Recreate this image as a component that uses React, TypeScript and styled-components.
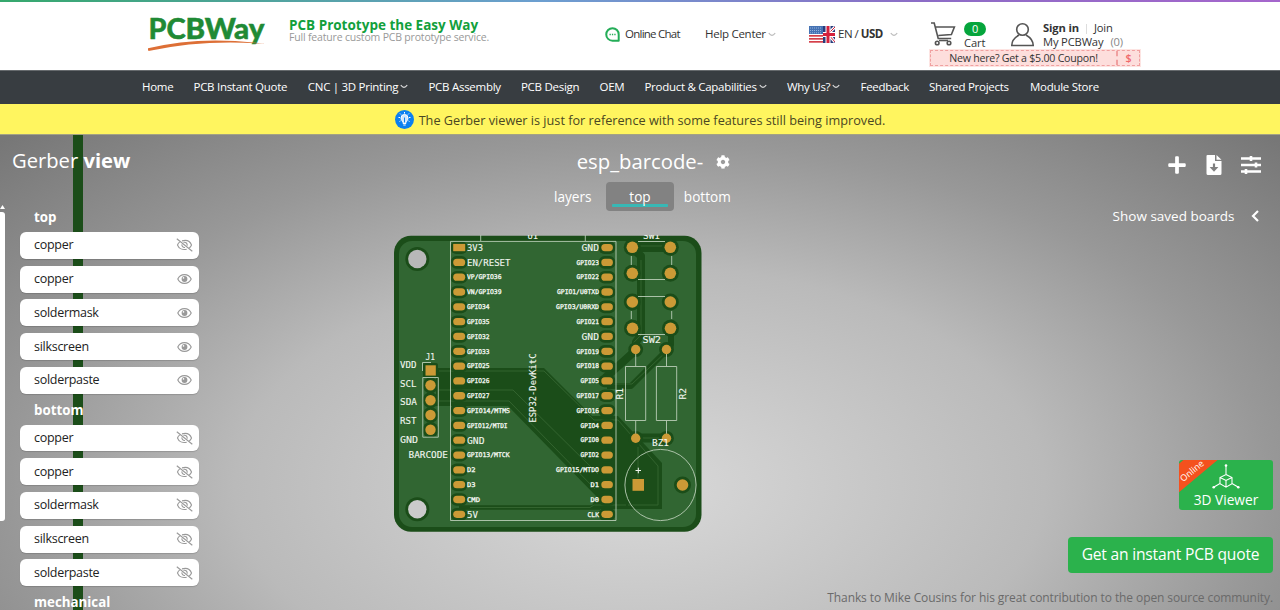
import React from 'react';
import styled, { createGlobalStyle } from 'styled-components';
import { FaPlus, FaCog } from 'react-icons/fa';

const GlobalStyle = createGlobalStyle`
  * { box-sizing: border-box; }
  body { margin: 0; overflow: hidden; font-family: "Open Sans", "Noto Sans", sans-serif; color: #333; }
  svg { display: block; flex: none; }
`;

const Page = styled.div`
  width: 1280px;
  height: 610px;
  display: flex;
  flex-direction: column;
  overflow: hidden;
`;

const Rainbow = styled.div`
  height: 2px;
  flex: none;
  background: linear-gradient(90deg, #35a86c, #6c9fd0 42%, #8c6cc6 72%, #a566cc);
`;

const Header = styled.header`
  height: 68px;
  flex: none;
  background: #fff;
  display: grid;
  grid-template-columns: 141px 316px 100px 104px 122px 211px;
  padding-left: 148px;
  font-size: 12px;
  white-space: nowrap;
`;

const Slogan = styled.div`
  padding-top: 14px;
`;
const SloganTitle = styled.div`
  font-size: 13.5px;
  line-height: 18px;
  font-weight: 700;
  color: #12a03c;
`;
const SloganSub = styled.div`
  font-size: 10.5px;
  line-height: 12px;
  letter-spacing: -0.18px;
  margin-top: -3px;
  color: #999;
`;

const Tool = styled.div<{ $gap?: number; $tracking?: number }>`
  height: 22px;
  margin-top: 21px;
  display: flex;
  align-items: center;
  gap: ${(p) => p.$gap ?? 5}px;
  font-size: 11.5px;
  letter-spacing: ${(p) => p.$tracking ?? -0.28}px;
`;
const ToolText = styled.span`
  margin-top: -1px;
`;
const Currency = styled.span`
  margin: -1px 4px 0 0;
`;

const AccountArea = styled.div`
  display: grid;
  grid-template-columns: 80px 131px;
  grid-template-rows: 48px 18px;
`;
const Account = styled.div<{ $gap: number }>`
  display: flex;
  padding-top: 18px;
  gap: ${(p) => p.$gap}px;
`;
const Lines = styled.div`
  font-size: 11.2px;
  line-height: 14px;
  letter-spacing: -0.15px;
  padding-top: 1px;
`;
const Line = styled.div`
  display: flex;
  gap: 7px;
`;
const Divider = styled.span`
  width: 1px;
  height: 10px;
  margin-top: 3px;
  background: #ddd;
`;
const Muted = styled.span`
  color: #888;
`;
const Badge = styled.div`
  width: 22px;
  height: 14px;
  margin-top: 1px;
  border-radius: 7px;
  background: #05a53c;
  color: #fff;
  font-size: 11px;
  line-height: 14px;
  text-align: center;
`;
const Coupon = styled.div`
  grid-column: 1 / -1;
  width: 210px;
  height: 16px;
  margin: 0 0 0 -1px;
  border: 1px dashed #f0a0a0;
  outline: 1px solid #fde4e2;
  background: #fddedc;
  display: grid;
  grid-template-columns: 185px 1fr;
  font-size: 10.6px;
  letter-spacing: -0.23px;
  line-height: 14px;
  text-align: center;
`;
const CouponAmount = styled.span`
  border-left: 2px dashed #f0a0a0;
  color: #f0696c;
  font-weight: 600;
`;

const Nav = styled.nav`
  height: 34px;
  flex: none;
  border-top: 1px solid #666a6d;
  background: #383d41;
  color: #fff;
  display: flex;
  padding: 0 0 2px 142px;
  font-size: 11.5px;
  letter-spacing: -0.28px;
  white-space: nowrap;
`;
const NavItem = styled.span<{ $w: number }>`
  flex: none;
  width: ${(p) => p.$w}px;
  display: flex;
  align-items: center;
  gap: 2px;
`;

const Notice = styled.div`
  height: 30px;
  flex: none;
  background: #fff55f;
  display: flex;
  align-items: center;
  justify-content: center;
  gap: 5px;
  padding-top: 1px;
  font-size: 12.7px;
  color: #4a4722;
`;

const Stage = styled.main`
  position: relative;
  flex: 1;
  min-height: 0;
  border-top: 1px solid #a3a284;
  background: radial-gradient(ellipse 900px 490px at 50% 74%, #d9d9d9 0%, #bababa 45%, #989898 70%, #777 100%);
  color: #fff;
  display: grid;
  grid-template-columns: minmax(0, 1fr) 300px minmax(0, 1fr);
`;
const EdgeStrip = styled.div`
  position: absolute;
  left: 73px;
  top: 0;
  bottom: 0;
  width: 10px;
  background: #1b4d19;
`;
const BoardLayer = styled.div`
  position: absolute;
  left: 394px;
  top: 100px;
`;

const Side = styled.section`
  position: relative;
  min-height: 0;
  overflow: hidden;
`;
const Brand = styled.h1`
  margin: 0;
  height: 66px;
  padding: 11px 0 0 12px;
  font-size: 20.2px;
  line-height: 28px;
  font-weight: 400;
`;
const Panel = styled.div`
  display: flex;
  gap: 15px;
`;
const ScrollTrack = styled.div`
  width: 5px;
  padding-top: 4px;
  display: flex;
  flex-direction: column;
  gap: 3px;
`;
const ScrollThumb = styled.div`
  height: 309px;
  border-radius: 0 3px 3px 0;
  background: #fff;
`;
const LayerList = styled.div`
  width: 179px;
`;
const GroupName = styled.div`
  height: 31px;
  padding-left: 14px;
  font-size: 13.3px;
  line-height: 33px;
  font-weight: 700;
`;
const Group = styled.div`
  height: 192.5px;
`;
const Rows = styled.div`
  display: flex;
  flex-direction: column;
  gap: 6.95px;
`;
const LayerRow = styled.div`
  height: 26.8px;
  padding: 0 6px 0 14px;
  border-radius: 6px;
  background: #fff;
  color: #222;
  box-shadow: 0 1px 1px rgba(0, 0, 0, 0.15);
  display: flex;
  align-items: center;
  justify-content: space-between;
  font-size: 12.5px;
  letter-spacing: -0.28px;
  line-height: 28px;
`;

const Center = styled.section`
  position: relative;
  display: flex;
  flex-direction: column;
  align-items: center;
`;
const BoardName = styled.div`
  height: 47px;
  padding-top: 13px;
  display: grid;
  grid-template-columns: 27px auto 27px;
  font-size: 20.3px;
  line-height: 27px;
`;
const GearSlot = styled.span`
  padding: 7px 0 0 13px;
`;
const Tabs = styled.div`
  display: flex;
`;
const Tab = styled.div<{ $active?: boolean }>`
  width: 67.3px;
  height: 29px;
  padding: 0 6px;
  border-radius: 4px;
  background: ${(p) => (p.$active ? '#828282' : 'transparent')};
  font-size: 13.6px;
  line-height: 29px;
  text-align: center;
`;
const Underline = styled.div`
  height: 3px;
  margin-top: -7px;
  border-radius: 1px;
  background: #38b8b5;
`;

const Right = styled.section`
  position: relative;
  display: flex;
  flex-direction: column;
  align-items: flex-end;
  padding-right: 7px;
`;
const Actions = styled.div`
  display: flex;
  align-items: center;
  gap: 19px;
  height: 22px;
  margin: 19px 12px 0 0;
`;
const Saved = styled.div`
  display: flex;
  align-items: center;
  gap: 16px;
  height: 24px;
  margin: 28px 14.5px 0 0;
  font-size: 13.5px;
`;
const ViewerButton = styled.div`
  position: relative;
  width: 94px;
  height: 50px;
  margin-top: 232px;
  border-radius: 3px;
  background: #2bb24c;
  overflow: hidden;
  display: flex;
  flex-direction: column;
  align-items: center;
  padding-top: 4px;
  font-size: 13.7px;
  line-height: 20px;
`;
const Ribbon = styled.div`
  position: absolute;
  left: -25px;
  top: 0;
  width: 76px;
  height: 22px;
  transform: rotate(-40deg) translate(0, -3px);
  background: #f4511e;
  font-size: 9px;
  line-height: 28px;
  text-align: center;
`;
const QuoteButton = styled.div`
  width: 205px;
  height: 36px;
  margin-top: 27px;
  border-radius: 4px;
  background: #2bb24c;
  font-size: 15.6px;
  letter-spacing: -0.2px;
  line-height: 35px;
  text-align: center;
  white-space: nowrap;
`;
const Thanks = styled.div`
  margin-top: 15px;
  font-size: 12px;
  letter-spacing: -0.09px;
  line-height: 20px;
  color: #6a6a6a;
  white-space: nowrap;
`;

const Chevron = ({ color = '#bbb' }: { color?: string }) => (
  <svg width="8" height="5" viewBox="0 0 8 5" fill="none" stroke={color} strokeWidth="1.200"><path d="M.8 1 Q4 5.600 7.200 1" /></svg>
);

const Logo = () => (
  <svg width="120" height="66" viewBox="148 2 120 66">
    <g fill="#1f8a35" stroke="#1f8a35" fontFamily="Lato, sans-serif">
      <text x="148.500" y="39.300" fontSize="28.500" fontWeight="700" textLength="37" lengthAdjust="spacingAndGlyphs" strokeWidth=".7">PC</text>
      <text x="185.500" y="39.300" fontSize="28.500" fontWeight="900" textLength="79" lengthAdjust="spacingAndGlyphs" strokeWidth=".5">BWay</text>
    </g>
    <path d="M147.500 48.500 Q200 35 266 44 Q205 39 148.500 51Z" fill="#dd6f36" />
  </svg>
);

const ChatIcon = () => (
  <svg width="15" height="15" viewBox="0 0 15 15">
    <path d="M7.500 1.200a6.200 6.200 0 1 0 0 12.500h6.200v-6.200a6.200 6.200 0 0 0-6.200-6.300z" fill="none" stroke="#24ad58" strokeWidth="2" strokeLinejoin="round" />
    <path d="M4.500 7.500h1.300M6.900 7.500h1.300M9.300 7.500h1.300" stroke="#24ad58" strokeWidth="1.400" />
  </svg>
);

const Flags = () => (
  <svg width="26" height="17" viewBox="0 0 26 17">
    <rect width="14" height="17" fill="#fff" />
    {[0, 1, 2, 3, 4, 5].map((i) => <rect key={i} y={i * 3} width="14" height="1.700" fill="#d5404a" />)}
    <rect width="14" height="8" fill="#4673b4" />
    <path d="M1 2h12M1 4.500h12M1 6.800h12" stroke="#a9c2e4" strokeWidth=".8" strokeDasharray="1 1" />
    <rect x="14" width="12" height="17" fill="#293c7c" />
    <path d="M19 8L26 1M19 8L26 16" stroke="#fff" strokeWidth="3" />
    <path d="M19 8L26 1M19 8L26 16" stroke="#d4213d" strokeWidth="1" />
    <path d="M14 8.500h12M19 0v17" stroke="#fff" strokeWidth="5" />
    <path d="M14 8.500h12M19 0v17" stroke="#d4213d" strokeWidth="3" />
  </svg>
);

const CartIcon = () => (
  <svg width="26" height="26" viewBox="0 0 26 26" fill="none" stroke="#555" strokeWidth="1.600">
    <path d="M0 3h3.200l4 15.500h13M4.400 7h19l-3 7.500-13 1" />
    <circle cx="6.200" cy="23" r="1.800" /><circle cx="18" cy="23" r="1.800" /><path d="M8 20.500h9" />
  </svg>
);
const UserIcon = () => (
  <svg width="25" height="27" viewBox="0 0 25 27" fill="none" stroke="#555" strokeWidth="1.600">
    <circle cx="11.500" cy="9.500" r="5.800" /><path d="M.8 25.500c0-6 3.700-8.500 7.200-10.500M22.200 25.500c0-6-3.700-8.500-7.200-10.500M0 25.500h23" />
  </svg>
);

const BulbIcon = () => (
  <svg width="19" height="19" viewBox="0 0 19 19">
    <circle cx="9.500" cy="9.500" r="9.500" fill="#0b80f0" />
    <path d="M7.700 12.300C7.300 10.500 6 10 6 8a3.500 3.500 0 0 1 7 0c0 2-1.300 2.500-1.700 4.300zM7.800 13.500h3.400M8.300 15h2.400" fill="#cfe5fb" stroke="#fff" strokeWidth="1" />
    <path d="M9.500 7.500v5" stroke="#0b80f0" />
    <path d="M9.500 2v1.600M3.500 7.500h1.500M14 7.500h1.500M5 3.500l1 1M14 3.500l-1 1M4.500 11.500l1-.6M14.500 11.500l-1-.6" stroke="#fff" strokeWidth="1" />
  </svg>
);

const Eye = ({ hidden }: { hidden: boolean }) => (
  <svg width="17" height="14" viewBox="0 0 17 14" fill="none" stroke="#999" strokeWidth="1.100">
    {hidden ? (
      <>
        <path d="M6 2.900C10 1.800 14 3 15.500 7c-.5 1.300-1.200 2.200-2.200 3M3.800 3.900C2.700 4.600 1.900 5.700 1.500 7c1.300 3.700 5.200 5.200 9.200 4.200M6 6.300A2.600 2.600 0 0 0 9 9.500M7.500 4.500a2.600 2.600 0 0 1 3.500 3.300" />
        <path d="M.8.800l15.500 12.400" />
      </>
    ) : (
      <>
        <path d="M1.800 7C3.200 3.800 5.500 2.600 8.500 2.600S13.800 3.800 15.200 7c-1.400 3.200-3.700 4.400-6.700 4.400S3.200 10.200 1.800 7z" />
        <circle cx="8.500" cy="7" r="2.900" fill="#999" stroke="none" />
        <circle cx="7.500" cy="5.900" r=".8" fill="#fff" stroke="none" />
      </>
    )}
  </svg>
);

const FileIcon = () => (
  <svg width="16" height="20" viewBox="0 0 16 20">
    <path d="M1.500 0H9v6h6.500v12.500a1.500 1.500 0 0 1-1.500 1.500H2A1.500 1.500 0 0 1 .5 18.500V1A1 1 0 0 1 1.500 0zM10.500 0l5 4.800h-5z" fill="#fff" />
    <path d="M8 8.500v4" stroke="#808080" strokeWidth="2.200" /><path d="M3.600 12h8.800L8 16.800z" fill="#808080" />
  </svg>
);
const SlidersIcon = () => (
  <svg width="20" height="18" viewBox="0 0 20 18" stroke="#fff" strokeWidth="2.300">
    <path d="M0 2.500h20M0 9h20M0 15.500h20" /><path d="M10 0v5M15 6.500v5M5 13v5" strokeWidth="2.600" />
  </svg>
);
const CubeIcon = () => (
  <svg width="28" height="26" viewBox="0 0 28 26" fill="none" stroke="#fff" strokeWidth="1.100">
    <path d="M14 10.500l6 3v6.200l-6 3.500-6-3.500v-6.200zM8 13.500l6 3 6-3M14 16.500v6.500M14 10.500V2M8 19.500l-6 3.500M20 19.500l6 3.500" />
    <g fill="#fff" stroke="none"><circle cx="14" cy="1.500" r="1.300" /><circle cx="1.700" cy="23.300" r="1.300" /><circle cx="26.300" cy="23.300" r="1.300" /></g>
  </svg>
);

type Pin = [label: string, width: number, big?: boolean];
const leftPins: Pin[] = [
  ['3V3', 16, true], ['EN/RESET', 43.500, true], ['VP/GPIO36', 34.500], ['VN/GPIO39', 34.500], ['GPIO34', 22.500], ['GPIO35', 22.500],
  ['GPIO32', 22.500], ['GPIO33', 22.500], ['GPIO25', 22.500], ['GPIO26', 22.500], ['GPIO27', 22.500], ['GPIO14/MTMS', 43],
  ['GPIO12/MTDI', 40.500], ['GND', 17.500, true], ['GPIO13/MTCK', 42.500], ['D2', 8.500], ['D3', 8.500], ['CMD', 13], ['5V', 11, true],
];
const rightPins: Pin[] = [
  ['GND', 17.500, true], ['GPIO23', 22.500], ['GPIO22', 22.500], ['GPIO1/U0TXD', 42], ['GPIO3/U0RXD', 43], ['GPIO21', 22.500],
  ['GND', 17.500, true], ['GPIO19', 22.500], ['GPIO18', 22.500], ['GPIO5', 18.500], ['GPIO17', 22.500], ['GPIO16', 22.500],
  ['GPIO4', 18.500], ['GPIO0', 18.500], ['GPIO2', 18.500], ['GPIO15/MTDO', 43], ['D1', 8.500], ['D0', 8.500], ['CLK', 11.500],
];
const pinY = (i: number) => 247.600 + i * 14.820;

type LabelProps = { x: number; y: number; w: number; size?: number; heavy?: boolean; children: string };
const Label = ({ x, y, w, size = 9, heavy, children }: LabelProps) => (
  <text x={x} y={y} fontSize={size} stroke="#f2f6f0" strokeWidth={heavy ? 0.3 : 0.1} textLength={w} lengthAdjust="spacingAndGlyphs">{children}</text>
);

const dark = '#1b4d19';
const gold = '#cc9a36';
const pads: [number, number, number][] = [
  [632.300, 247.300, 5.800], [670.300, 247.300, 5.800], [632.300, 273.300, 5.800], [670.300, 273.300, 5.800],
  [632.300, 302, 5.800], [670.300, 302, 5.800], [632.500, 328.300, 5.800], [670.500, 328.300, 5.800],
  [635.700, 349.500, 4.700], [666.500, 349.500, 4.700], [635.700, 438.300, 4.700], [666.500, 438.300, 4.700],
  [682.500, 485, 5.800], [430.500, 385.300, 5.200], [430.500, 400.200, 5.200], [430.500, 415, 5.200], [430.500, 429.800, 5.200],
];

const Board = () => (
  <svg width="308" height="298" viewBox="394 235 308 298">
    <rect x="394" y="235.700" width="307.500" height="296" rx="17" fill={dark} />
    <rect x="399" y="241" width="297" height="286" rx="13" fill="#316632" />
    <path d="M436 368H544L592 416H618L662 463V509H590L597 497L508 406H436Z" fill={dark} />
    <g fill="none" stroke={dark} strokeWidth="4.500" strokeLinejoin="round">
      <path d="M459 507.500H600" />
      <path d="M632 247H670" strokeWidth="10" />
      <path d="M634 250L641 256V335L636 342V350L605 378" strokeWidth="8" />
      <path d="M671 328V345L665 352L631 386H607" strokeWidth="6" />
      <path d="M636 438H666" strokeWidth="9" />
    </g>
    <g fill="none" stroke="#33642f" strokeWidth="1">
      <path d="M439 371H544L594 420H618L658 466V505H628" />
      <path d="M439 390H513L598 474" />
      <path d="M439 401H509L595 489" />
      <path d="M470 507.500H590L594 505H626" />
      <path d="M638 246H668M641 260V335L607 370M668 350L632 384H609M640 438H662" />
      <path d="M638 447V478" />
    </g>
    {[259, 509.300].map((y) => (
      <g key={y}><circle cx="417.300" cy={y} r="12" fill={dark} /><circle cx="417.300" cy={y} r="9.200" fill={y < 300 ? '#b8b8b8' : '#cbcbcb'} /></g>
    ))}
    <g fill={dark}>
      {pads.map(([x, y, r]) => <circle key={`${x}-${y}`} cx={x} cy={y} r={r + 2.700} />)}
      {leftPins.map((_, i) => (
        <g key={i}>
          <rect x="450.500" y={pinY(i) - 6.300} width="17" height="12.600" rx="6" />
          <rect x="598.500" y={pinY(i) - 6.300} width="17" height="12.600" rx="6" />
        </g>
      ))}
      <rect x="423" y="363" width="15" height="15" rx="2" />
    </g>
    <g fill="none" stroke="#b9cdb5" strokeWidth=".9">
      <path d="M450.500 241.400H616V520.500H450.500Z" />
      <path d="M480.700 235V241M585.300 235V241" />
      <path d="M422.500 371V362.500H431M422.800 377.500H438.300V437.200H422.800Z" />
      <path d="M638 241.500H665M638 279.500H665M631.300 256V265M671.700 256V265M638 296.500H665M638 334.500H665M631.300 311V319M671.700 311V319" />
      <path d="M625.500 366.500H645.700V420.500H625.500ZM656.400 366.500H676.700V420.500H656.400ZM635.700 354V366.500M666.500 354V366.500M635.700 420.500V434M666.500 420.500V434" />
      <circle cx="660.500" cy="485" r="35.600" />
    </g>
    <g fill={gold}>
      {pads.map(([x, y, r]) => <circle key={`${x}-${y}`} cx={x} cy={y} r={r} />)}
      {leftPins.map((_, i) => (
        <g key={i}>
          <rect x="453.200" y={pinY(i) - 3.700} width="12" height="7.300" rx={i === 0 ? 0 : 3.600} />
          <rect x="601.300" y={pinY(i) - 3.700} width="11.600" height="7.300" rx="3.600" />
        </g>
      ))}
      <rect x="425.500" y="365.300" width="10.300" height="10.300" />
      <rect x="632.500" y="479" width="11.500" height="11.800" />
    </g>
    <g fill="#f2f6f0" fontFamily='"DejaVu Sans Mono", "Liberation Mono", monospace'>
      {leftPins.map(([t, w, big], i) => (
        <Label key={i} x={467} y={pinY(i) + (big ? 3.500 : 2.200)} w={w} size={big ? 9 : 6.400} heavy={!big}>{t}</Label>
      ))}
      {rightPins.map(([t, w, big], i) => (
        <Label key={i} x={599 - w} y={pinY(i) + (big ? 3.500 : 2.200)} w={w} size={big ? 9 : 6.400} heavy={!big}>{t}</Label>
      ))}
      <Label x={400} y={367.500} w={16.500}>VDD</Label>
      <Label x={400} y={386.500} w={16.500}>SCL</Label>
      <Label x={400} y={405} w={17}>SDA</Label>
      <Label x={400} y={424} w={16.500}>RST</Label>
      <Label x={400} y={443} w={18}>GND</Label>
      <Label x={425.500} y={360} w={9.500}>J1</Label>
      <Label x={408.500} y={458} w={39.500}>BARCODE</Label>
      <Label x={527.500} y={238.500} w={10.500}>U1</Label>
      <Label x={643} y={238.500} w={17}>SW1</Label>
      <Label x={642.500} y={343} w={18.500}>SW2</Label>
      <Label x={652} y={446} w={17}>BZ1</Label>
      <path d="M635.500 470.500H641M638.300 467.700V473.300" stroke="#f2f6f0" strokeWidth="1" />
      <g transform="translate(536 422.500) rotate(-90)"><Label x={0} y={0} w={69}>ESP32-DevKitC</Label></g>
      <g transform="translate(623 399.500) rotate(-90)"><Label x={0} y={0} w={11.500}>R1</Label></g>
      <g transform="translate(685.500 399.500) rotate(-90)"><Label x={0} y={0} w={11.500}>R2</Label></g>
    </g>
  </svg>
);

const layerNames = ['copper', 'copper', 'soldermask', 'silkscreen', 'solderpaste'];
const navItems: [string, number, boolean?][] = [
  ['Home', 51.500], ['PCB Instant Quote', 114.300], ['CNC | 3D Printing', 120.700, true], ['PCB Assembly', 92.500], ['PCB Design', 78.500],
  ['OEM', 45], ['Product & Capabilities', 142.500, true], ['Why Us?', 73.500, true], ['Feedback', 68.500], ['Shared Projects', 101], ['Module Store', 80],
];

export default function App() {
  return (
    <Page>
      <GlobalStyle />
      <Rainbow />
      <Header>
        <Logo />
        <Slogan>
          <SloganTitle>PCB Prototype the Easy Way</SloganTitle>
          <SloganSub>Full feature custom PCB prototype service.</SloganSub>
        </Slogan>
        <Tool $tracking={-0.75}><ChatIcon /><ToolText>Online Chat</ToolText></Tool>
        <Tool $gap={2}><ToolText>Help Center</ToolText><Chevron /></Tool>
        <Tool $gap={3} $tracking={-0.5}><Flags /><Currency>EN / <b>USD</b></Currency><Chevron /></Tool>
        <AccountArea>
          <Account $gap={7}><CartIcon /><Lines><Badge>0</Badge>Cart</Lines></Account>
          <Account $gap={7}>
            <UserIcon />
            <Lines>
              <Line><b>Sign in</b><Divider /><span>Join</span></Line>
              <Line><span>My PCBWay</span><Muted>(0)</Muted></Line>
            </Lines>
          </Account>
          <Coupon><span>New here? Get a $5.00 Coupon!</span><CouponAmount>$</CouponAmount></Coupon>
        </AccountArea>
      </Header>
      <Nav>
        {navItems.map(([label, w, more]) => (
          <NavItem key={label} $w={w}>{label}{more && <Chevron color="#ddd" />}</NavItem>
        ))}
      </Nav>
      <Notice><BulbIcon /><span>The Gerber viewer is just for reference with some features still being improved.</span></Notice>
      <Stage>
        <EdgeStrip />
        <BoardLayer><Board /></BoardLayer>
        <Side>
          <Brand>Gerber <b>view</b></Brand>
          <Panel>
            <ScrollTrack>
              <svg width="5" height="4" viewBox="0 0 5 4"><path d="M0 4L2.500 0L5 4Z" fill="#fff" /></svg>
              <ScrollThumb />
            </ScrollTrack>
            <LayerList>
              {['top', 'bottom'].map((side) => (
                <Group key={side}>
                  <GroupName>{side}</GroupName>
                  <Rows>
                    {layerNames.map((name, i) => (
                      <LayerRow key={i}>{name}<Eye hidden={side === 'bottom' || i === 0} /></LayerRow>
                    ))}
                  </Rows>
                </Group>
              ))}
              <GroupName>mechanical</GroupName>
            </LayerList>
          </Panel>
        </Side>
        <Center>
          <BoardName><span /><span>esp_barcode-</span><GearSlot><FaCog size={14} /></GearSlot></BoardName>
          <Tabs>
            <Tab>layers</Tab>
            <Tab $active>top<Underline /></Tab>
            <Tab>bottom</Tab>
          </Tabs>
        </Center>
        <Right>
          <Actions><FaPlus size={20} /><FileIcon /><SlidersIcon /></Actions>
          <Saved>
            <span>Show saved boards</span>
            <svg width="8" height="12" viewBox="0 0 8 12" fill="none" stroke="#fff" strokeWidth="2.200"><path d="M7 1L2 6l5 5" /></svg>
          </Saved>
          <ViewerButton><CubeIcon /><span>3D Viewer</span><Ribbon>Online</Ribbon></ViewerButton>
          <QuoteButton>Get an instant PCB quote</QuoteButton>
          <Thanks>Thanks to Mike Cousins for his great contribution to the open source community.</Thanks>
        </Right>
      </Stage>
    </Page>
  );
}
